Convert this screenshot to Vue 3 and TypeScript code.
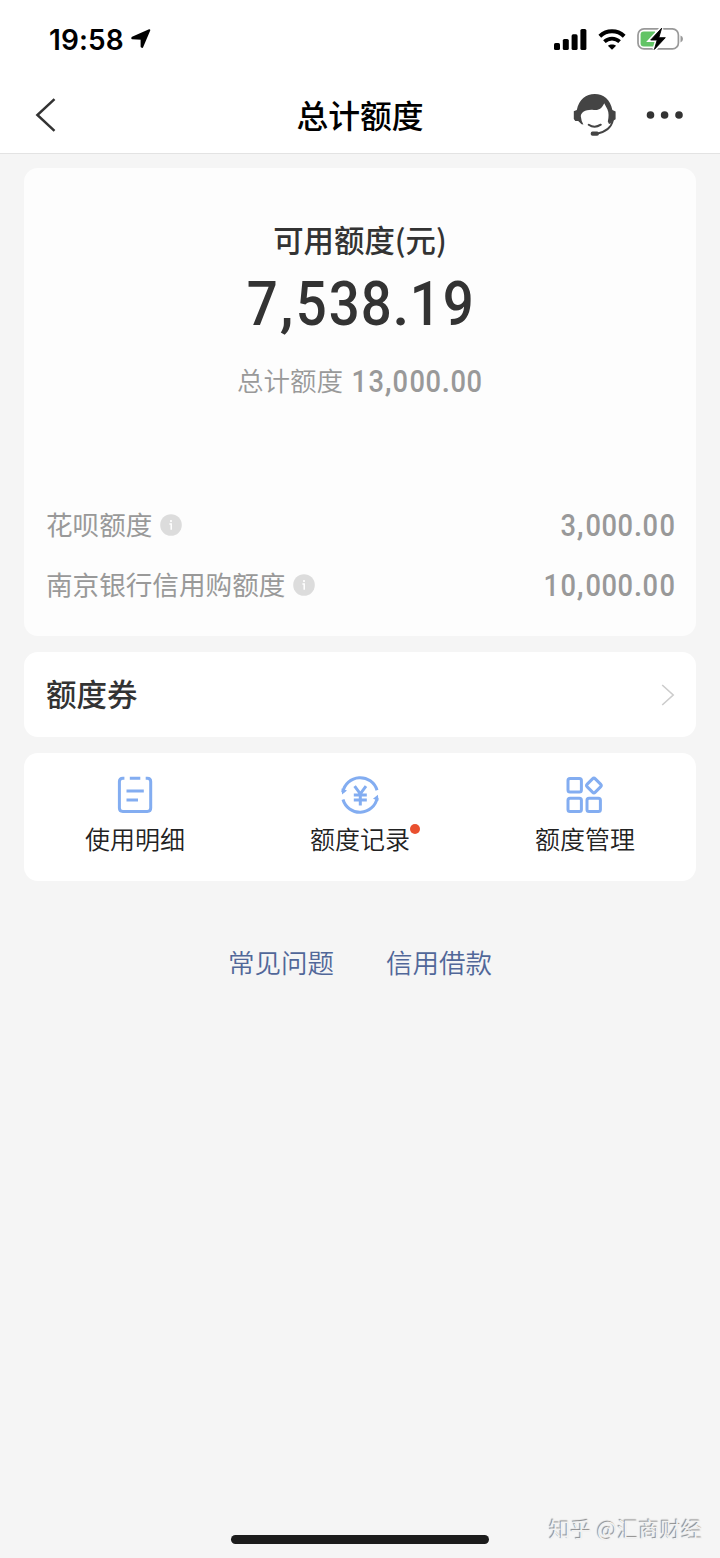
<script setup lang="ts">
interface QuotaRow {
  label: string
  amount: string
}

interface Entry {
  label: string
  icon: 'detail' | 'record' | 'manage'
  dot: boolean
}

const available = '7,538.19'
const total = '13,000.00'

const rows: QuotaRow[] = [
  { label: '花呗额度', amount: '3,000.00' },
  { label: '南京银行信用购额度', amount: '10,000.00' },
]

const entries: Entry[] = [
  { label: '使用明细', icon: 'detail', dot: false },
  { label: '额度记录', icon: 'record', dot: true },
  { label: '额度管理', icon: 'manage', dot: false },
]

const links: string[] = ['常见问题', '信用借款']

const isMark = (c: string): boolean => c === ',' || c === '.'
</script>

<template>
  <div class="page">
    <header class="top">
      <div class="status">
        <span class="time">19:58</span>
        <svg class="locate" width="20" height="20" viewBox="0 0 20 20">
          <path d="M18.4 1.2 11.3 18 10.5 17.6V9.8L1.2 9.3 1.4 8.6Z" fill="#000" stroke="#000" stroke-width="1.8" stroke-linejoin="round" />
        </svg>
        <div class="indicators">
          <svg width="33" height="21" viewBox="0 0 33 21">
            <rect x="0" y="14" width="6" height="7" rx="1.6" />
            <rect x="8.8" y="10" width="6" height="11" rx="1.6" />
            <rect x="17.6" y="5.3" width="6" height="15.7" rx="1.6" />
            <rect x="26.4" y="0" width="6" height="21" rx="1.6" />
          </svg>
          <svg class="wifi" width="28" height="21" viewBox="0 0 28 21">
            <path d="M1.8 7.2C8.8.6 19.2.6 26.2 7.2" fill="none" stroke="#000" stroke-width="4" />
            <path d="M6.4 12.6C10.8 8.5 17.2 8.5 21.6 12.6" fill="none" stroke="#000" stroke-width="3.7" />
            <path d="M14 20.8 9.9 16.8C12.1 14.9 15.9 14.9 18.1 16.8Z" />
          </svg>
          <svg class="battery" width="47" height="24" viewBox="0 0 47 24">
            <rect x="1" y="1.9" width="40.4" height="20" rx="6" fill="none" stroke="#999" stroke-width="1.7" />
            <path d="M6.8 4.4H18V19.4H6.8Q3.6 19.4 3.6 16.2V7.6Q3.6 4.4 6.8 4.4Z" fill="#62c466" />
            <path d="M43.5 8.6Q46 9.6 46 12T43.5 15.4Z" fill="#999" />
            <path d="M24.6 1.2 13.7 13H20.2L17.4 22.4 28.3 10.7H21.8Z" stroke="#fff" stroke-width="4" />
            <path d="M24.6 1.2 13.7 13H20.2L17.4 22.4 28.3 10.7H21.8Z" stroke="#000" stroke-width=".9" stroke-linejoin="round" />
          </svg>
        </div>
      </div>
      <div class="nav">
        <svg class="back" width="22" height="34" viewBox="0 0 22 34">
          <path d="M19.5 1.2 2.4 17 19.5 32.8" fill="none" stroke="#333" stroke-width="2.5" />
        </svg>
        <h1 class="title">总计额度</h1>
        <svg class="service" width="44" height="44" viewBox="0 0 44 44">
          <path d="M3.8 17C6 6.2 13 1 21.8 1S37.2 6.4 39.4 17L42.6 18.5V26.3L39 28.5Q37.3 31 36 31L34.8 28.4Q36.5 21 34.4 16.2L31.2 10.2C29.2 14.6 26.2 17.7 20.8 16.9C13.4 16 8 19 7.8 23.2Q8.2 27.8 10.4 31.6L8.6 31.2 5.2 28H2.3L.8 26V18.2Z" fill="#444" />
          <path d="M15.7 31.7Q21.5 35.7 27.8 31.7" fill="none" stroke="#444" stroke-width="2" stroke-linecap="round" />
          <path d="M40 27Q37.4 38.5 23 40.8" fill="none" stroke="#444" stroke-width="1.8" />
          <rect x="17.7" y="38.6" width="8.2" height="4.2" rx="1.8" fill="#444" />
        </svg>
        <svg class="more" width="38" height="8" viewBox="0 0 38 8">
          <circle cx="4.5" cy="4" r="3.8" />
          <circle cx="18.6" cy="4" r="3.8" />
          <circle cx="33" cy="4" r="3.8" />
        </svg>
      </div>
    </header>

    <main class="content">
      <section class="card summary">
        <h2 class="caption">可用额度(元)</h2>
        <div class="num big"><span v-for="(c, i) in available" :key="i" :class="isMark(c) ? 'mark' : 'digit'">{{ c }}</span></div>
        <div class="total">
          <span>总计额度</span>
          <div class="num"><span v-for="(c, i) in total" :key="i" :class="isMark(c) ? 'mark' : 'digit'">{{ c }}</span></div>
        </div>
        <ul class="rows">
          <li v-for="row in rows" :key="row.label" class="row">
            <span>{{ row.label }}</span>
            <svg class="info" width="22" height="22" viewBox="0 0 22 22">
              <circle cx="11" cy="11" r="10.8" fill="#dcdcdc" />
              <circle cx="11" cy="7.1" r="1.1" fill="#fff" />
              <path d="M9.4 10H11.2V15.8" fill="none" stroke="#fff" stroke-width="1.5" />
            </svg>
            <div class="num amount"><span v-for="(c, i) in row.amount" :key="i" :class="isMark(c) ? 'mark' : 'digit'">{{ c }}</span></div>
          </li>
        </ul>
      </section>

      <section class="card coupon">
        <h2 class="coupon-title">额度券</h2>
        <svg width="14" height="22" viewBox="0 0 14 22">
          <path d="M1.2 1 12.2 11 1.2 21" fill="none" stroke="#ccc" stroke-width="1.6" />
        </svg>
      </section>

      <section class="card entries">
        <div v-for="entry in entries" :key="entry.label" class="entry">
          <svg v-if="entry.icon === 'detail'" class="glyph" width="40" height="40" viewBox="0 0 40 40">
            <path d="M9.4 3.2H7.8Q4.4 3.2 4.4 6.6V33.1Q4.4 36.5 7.8 36.5H32.3Q35.7 36.5 35.7 33.1V6.6Q35.7 3.2 32.3 3.2H30.7M14.8 3.2H25.3M11.5 16H28.8M11.5 25H23" />
          </svg>
          <svg v-else-if="entry.icon === 'record'" class="glyph" width="40" height="40" viewBox="0 0 40 40">
            <path d="M2.8 17.2A17.6 17.6 0 0 1 37 15.2M37.2 23A17.6 17.6 0 0 1 3 24.5" />
            <path class="solid" d="M1.5 13.4 7 15.4 2.1 19.4ZM38.5 25.8 33 23.8 37.9 19.8Z" />
            <path d="M14.6 11.2 20.3 18.8 26 11.2M13.8 20H26.8M13.8 25H26.8M20.3 18.8V30.5" />
          </svg>
          <svg v-else class="glyph" width="40" height="40" viewBox="0 0 40 40">
            <rect x="3" y="3.6" width="13.4" height="13.4" rx="2" />
            <rect x="3" y="23.2" width="13.4" height="13.4" rx="2" />
            <rect x="22" y="23.2" width="13.4" height="13.4" rx="2" />
            <rect x="23.2" y="4.8" width="11.4" height="11.4" rx="2" transform="rotate(45 28.9 10.5)" />
          </svg>
          <span class="entry-label">{{ entry.label }}<i v-if="entry.dot" class="dot"></i></span>
        </div>
      </section>

      <nav class="links">
        <a v-for="link in links" :key="link">{{ link }}</a>
      </nav>
    </main>

    <footer class="bottom">
      <div class="home-bar"></div>
      <span class="author">知乎 @汇商财经</span>
    </footer>
  </div>
</template>

<style>
body {
  margin: 0;
  background: #f5f5f5;
}
</style>

<style scoped>
.page {
  box-sizing: border-box;
  width: 720px;
  height: 1558px;
  display: flex;
  flex-direction: column;
  background: #f5f5f5;
  color: #333;
  font-family: 'Noto Sans CJK SC', sans-serif;
  font-weight: 350;
  overflow: hidden;
}
h1, h2, ul {
  margin: 0;
  padding: 0;
  font-weight: 400;
  list-style: none;
}
svg {
  display: block;
  flex: none;
}
.top {
  box-sizing: border-box;
  height: 154px;
  background: #fff;
  border-bottom: 1px solid #e3e3e3;
}
.status {
  height: 78px;
  display: flex;
  align-items: center;
  padding: 0 36px 0 49px;
}
.time {
  width: 82px;
  padding-top: 1px;
  font: 600 28px/40px Inter, sans-serif;
  letter-spacing: 0.1px;
  color: #000;
}
.indicators {
  margin-left: auto;
  display: flex;
  align-items: center;
}
.wifi {
  margin-left: 11px;
}
.battery {
  margin-left: 11px;
}
.nav {
  height: 73px;
  display: grid;
  grid-template-columns: 225px 313px 73px 1fr;
  align-items: center;
  padding-left: 35px;
}
.title {
  width: 200px;
  padding-bottom: 2px;
  text-align: center;
  font-size: 31.8px;
  line-height: 44px;
  font-weight: 500;
  color: #000;
}
.more {
  fill: #333;
}
.content {
  padding: 14px 24px 0;
}
.card {
  box-sizing: border-box;
  border-radius: 14px;
  background: #fff;
}
.summary {
  height: 468px;
  padding: 49px 23px 0;
  background: #fdfdfd;
}
.caption {
  text-align: center;
  font-size: 30.4px;
  line-height: 44px;
  font-weight: 500;
}
.num {
  display: inline-flex;
  font: 500 31px/36px Roboto, sans-serif;
}
.digit {
  width: 0.529em;
  display: flex;
  justify-content: center;
  transform: scaleX(0.88);
}
.mark {
  width: 0.275em;
  display: flex;
  justify-content: center;
}
.big {
  display: flex;
  justify-content: center;
  margin-top: 8px;
  font-size: 62px;
  line-height: 70px;
}
.big .digit {
  width: 0.522em;
}
.total {
  display: flex;
  justify-content: center;
  align-items: center;
  gap: 8px;
  margin-top: 22px;
  font-size: 26.5px;
  line-height: 38px;
  color: #999;
}
.total > span {
  padding-bottom: 2px;
}
.total .num {
  padding-top: 1px;
}
.rows {
  margin-top: 95px;
}
.row {
  height: 60px;
  display: flex;
  align-items: center;
  font-size: 26.6px;
  line-height: 38px;
  color: #999;
}
.row > span {
  margin-left: -1px;
  padding-bottom: 4px;
}
.info {
  margin: 0 0 3px 8px;
}
.amount {
  margin: 0 -2px 0 auto;
}
.coupon {
  height: 85px;
  margin-top: 16px;
  padding: 0 21px 0 22px;
  display: flex;
  align-items: center;
  justify-content: space-between;
}
.coupon-title {
  padding-bottom: 3px;
  font-size: 30.5px;
  line-height: 42px;
  font-weight: 500;
}
.entries {
  height: 128px;
  margin-top: 16px;
  display: grid;
  grid-template-columns: 222px 1fr 222px;
}
.entry {
  display: flex;
  flex-direction: column;
  align-items: center;
  padding-top: 22px;
}
.glyph {
  fill: none;
  stroke: #83adf1;
  stroke-width: 3;
}
.solid {
  fill: #83adf1;
  stroke: none;
}
.entry-label {
  position: relative;
  margin-top: 5px;
  font-size: 25px;
  line-height: 36px;
  color: #222;
}
.dot {
  position: absolute;
  top: 4px;
  right: -10px;
  width: 10px;
  height: 10px;
  border-radius: 50%;
  background: #e9502f;
}
.links {
  display: flex;
  justify-content: center;
  gap: 52px;
  margin-top: 61px;
  font-size: 26.5px;
  line-height: 40px;
  color: #516799;
}
.bottom {
  margin-top: auto;
  height: 58px;
  display: grid;
  grid-template-columns: 231px 258px 1fr;
}
.home-bar {
  grid-column: 2;
  height: 9px;
  margin-top: 35px;
  border-radius: 5px;
  background: #1c1c1c;
}
.author {
  margin: 13px 17px 0 0;
  text-align: right;
  font-size: 21px;
  line-height: 30px;
  letter-spacing: 0.4px;
  font-weight: 400;
  color: #f2f2f2;
  text-shadow: -1px -1px 1px #888;
}
</style>
